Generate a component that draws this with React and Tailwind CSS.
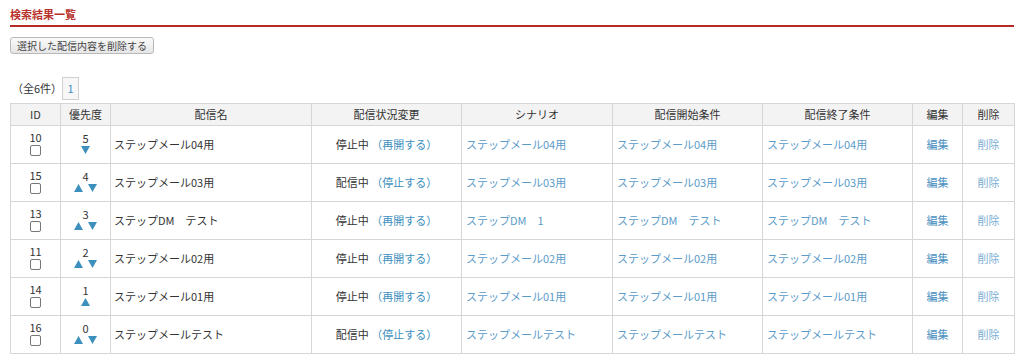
import React from "react";

const rows = [
  { id: 10, pr: 5, up: false, down: true, name: "ステップメール04用", status: "停止中", action: "再開する", scenario: "ステップメール04用", start: "ステップメール04用", end: "ステップメール04用" },
  { id: 15, pr: 4, up: true, down: true, name: "ステップメール03用", status: "配信中", action: "停止する", scenario: "ステップメール03用", start: "ステップメール03用", end: "ステップメール03用" },
  { id: 13, pr: 3, up: true, down: true, name: "ステップDM　テスト", status: "停止中", action: "再開する", scenario: "ステップDM　1", start: "ステップDM　テスト", end: "ステップDM　テスト" },
  { id: 11, pr: 2, up: true, down: true, name: "ステップメール02用", status: "停止中", action: "再開する", scenario: "ステップメール02用", start: "ステップメール02用", end: "ステップメール02用" },
  { id: 14, pr: 1, up: true, down: false, name: "ステップメール01用", status: "停止中", action: "再開する", scenario: "ステップメール01用", start: "ステップメール01用", end: "ステップメール01用" },
  { id: 16, pr: 0, up: true, down: true, name: "ステップメールテスト", status: "配信中", action: "停止する", scenario: "ステップメールテスト", start: "ステップメールテスト", end: "ステップメールテスト" },
];

const Up = () => (
  <svg width="9" height="8" viewBox="0 0 9 8"><polygon points="4.5,0 9,8 0,8" fill="#3d8fbd" /></svg>
);
const Down = () => (
  <svg width="9" height="8" viewBox="0 0 9 8"><polygon points="0,0 9,0 4.5,8" fill="#3d8fbd" /></svg>
);

const th = "border border-[#d6d6d6] bg-[#f3f3f3] font-normal h-[22px] text-center";
const td = "border border-[#d6d6d6] h-[38px]";

const App = () => {
  return (
    <div className="w-[1024px] h-[364px] bg-white text-[#333] text-[11px] px-[10px] pt-[7px]" style={{ fontFamily: '"Noto Sans CJK JP", "Noto Sans", sans-serif' }}>
      <h2 className="text-[#b8312b] font-bold text-[11px] leading-[14px] pb-[4px]">検索結果一覧</h2>
      <div className="h-[2px] bg-[#b52a22] w-[1004px]" />
      <button type="button" className="mt-[10px] h-[17px] px-[6px] text-[10px] leading-[15px] text-[#444] border border-[#b9b9b9] rounded-[3px] bg-gradient-to-b from-[#fafafa] to-[#e6e6e6]">
        選択した配信内容を削除する
      </button>
      <div className="flex items-center mt-[23px] h-[23px]">
        <span className="ml-[2px]">（全6件）</span>
        <span className="w-[17px] h-[23px] border border-[#d0d0d0] bg-[#f7f7f7] text-[#3d8fbd] flex items-center justify-center">1</span>
      </div>
      <table className="mt-[3px] border-collapse table-fixed w-[1004px]">
        <colgroup>
          <col className="w-[50px]" />
          <col className="w-[50px]" />
          <col className="w-[201px]" />
          <col className="w-[150px]" />
          <col className="w-[151px]" />
          <col className="w-[150px]" />
          <col className="w-[150px]" />
          <col className="w-[50px]" />
          <col className="w-[52px]" />
        </colgroup>
        <thead>
          <tr>
            <th className={th}>ID</th>
            <th className={th}>優先度</th>
            <th className={th}>配信名</th>
            <th className={th}>配信状況変更</th>
            <th className={th}>シナリオ</th>
            <th className={th}>配信開始条件</th>
            <th className={th}>配信終了条件</th>
            <th className={th}>編集</th>
            <th className={th}>削除</th>
          </tr>
        </thead>
        <tbody>
          {rows.map((r) => (
            <tr key={r.id}>
              <td className={`${td} text-center`}>
                <div className="flex flex-col items-center leading-[13px] -mt-[2px]">
                  <span>{r.id}</span>
                  <span className="mt-[1px] w-[11px] h-[11px] border border-[#777] rounded-[2px] bg-white" />
                </div>
              </td>
              <td className={`${td} text-center`}>
                <div className="flex flex-col items-center leading-[13px] -mt-[2px]">
                  <span>{r.pr}</span>
                  <span className="flex gap-[5px] h-[10px] items-center">
                    {r.up && <Up />}
                    {r.down && <Down />}
                  </span>
                </div>
              </td>
              <td className={`${td} pl-[3px]`}>{r.name}</td>
              <td className={`${td} text-center`}>
                {r.status} <span className="text-[#3d8fbd]">（{r.action}）</span>
              </td>
              <td className={`${td} pl-[4px] text-[#5b9bc8]`}>{r.scenario}</td>
              <td className={`${td} pl-[4px] text-[#5b9bc8]`}>{r.start}</td>
              <td className={`${td} pl-[4px] text-[#5b9bc8]`}>{r.end}</td>
              <td className={`${td} text-center text-[#4a8fc0]`}>編集</td>
              <td className={`${td} text-center text-[#7aaed3]`}>削除</td>
            </tr>
          ))}
        </tbody>
      </table>
    </div>
  );
};

export default App;
